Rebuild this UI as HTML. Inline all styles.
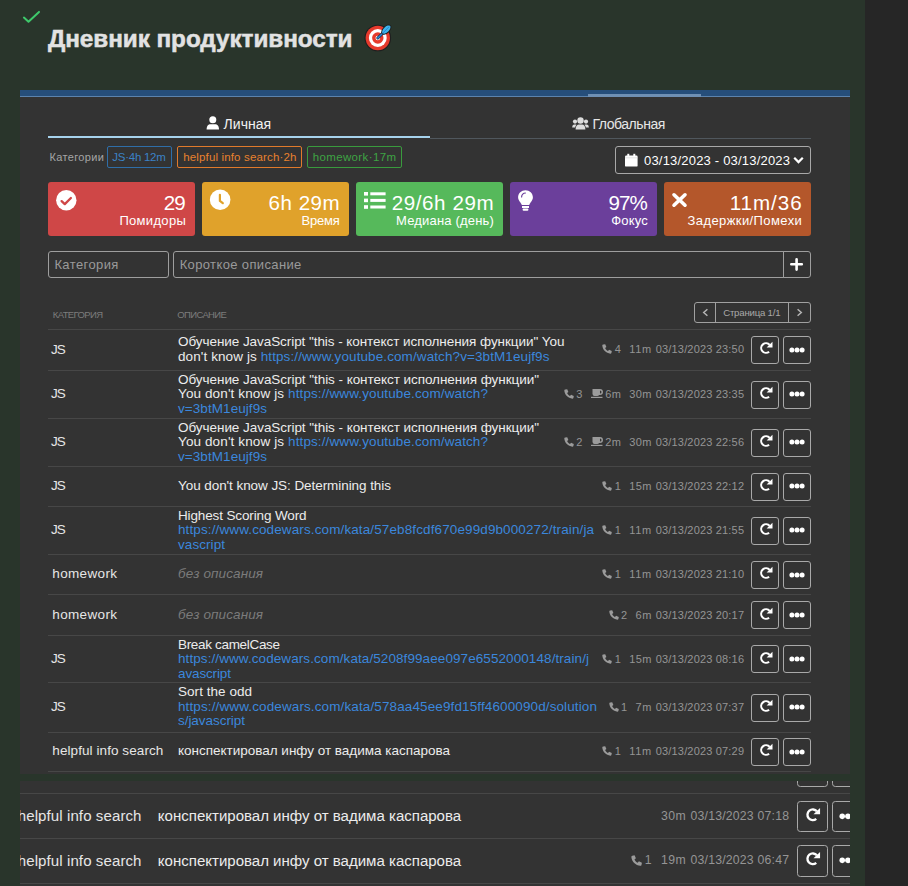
<!DOCTYPE html>
<html><head><meta charset="utf-8">
<style>
html,body{margin:0;padding:0;}
body{width:908px;height:886px;overflow:hidden;position:relative;background:#29352b;font-family:"Liberation Sans", sans-serif;}
.a{position:absolute;box-sizing:border-box;}
.t{position:absolute;white-space:nowrap;}
svg{position:absolute;overflow:visible;}
.lk{color:#3b87dc;}
.clip{position:absolute;overflow:hidden;}
</style></head><body>
<div class="a" style="left:865px;top:0px;width:43px;height:886px;background:#262626"></div>
<svg style="left:0;top:0" width="60" height="40"><polyline points="23.9,17.6 28.5,21.8 39,11.9" fill="none" stroke="#3ec96b" stroke-width="2" stroke-linecap="round" stroke-linejoin="round"/></svg>
<div class="t" style="font-size:24.3px;line-height:29px;color:#e2e2e2;font-weight:bold;top:23.68px;left:48px;letter-spacing:-0.058px;-webkit-text-stroke:0.5px #e2e2e2;">Дневник продуктивности</div>
<svg style="left:364px;top:24px" width="28" height="28" viewBox="0 0 28 28">
<circle cx="13.8" cy="14" r="13.3" fill="#1f1f1f"/>
<circle cx="13.8" cy="14" r="12.2" fill="#e63a2c"/>
<circle cx="13.8" cy="14" r="8.9" fill="#fff"/>
<circle cx="13.8" cy="14" r="5.7" fill="#e63a2c"/>
<circle cx="13.8" cy="14" r="2.3" fill="#fff"/>
<line x1="13.8" y1="14" x2="21" y2="7" stroke="#1d3550" stroke-width="3" stroke-linecap="round"/>
<line x1="13.8" y1="14" x2="21" y2="7" stroke="#2a86d8" stroke-width="1.5" stroke-linecap="round"/>
<ellipse cx="22.3" cy="5.6" rx="6.3" ry="3.6" transform="rotate(-45 22.3 5.6)" fill="#1f1f1f"/>
<ellipse cx="22.3" cy="5.6" rx="5.3" ry="2.7" transform="rotate(-45 22.3 5.6)" fill="#3cb6ec"/>
<line x1="18.5" y1="9.4" x2="25" y2="2.9" stroke="#2a86d8" stroke-width="1"/>
</svg>
<div class="a" style="left:20px;top:781px;width:830px;height:105px;background:#333333"></div>
<div class="a" style="left:20px;top:90px;width:830px;height:684px;background:#333333"></div>
<div class="a" style="left:20px;top:90px;width:830px;height:6px;background:#264e7a"></div>
<div class="a" style="left:20px;top:96px;width:830px;height:1px;background:#5c83ad"></div>
<div class="a" style="left:588px;top:94px;width:113px;height:3px;background:#6f90b4"></div>
<svg style="left:206px;top:116px" width="14" height="14" viewBox="0 0 14 14"><circle cx="6.8" cy="3.7" r="3.5" fill="#fff"/><path d="M0.6,13.6 C0.6,9.8 2.2,8.2 4.6,8.2 L9,8.2 C11.4,8.2 13,9.8 13,13.6 Z" fill="#fff"/></svg>
<div class="t" style="font-size:14px;line-height:17px;color:#f2f2f2;top:115.75px;left:223.6px;letter-spacing:0.039px;">Личная</div>
<svg style="left:572px;top:117px" width="17" height="13" viewBox="0 0 17 13"><circle cx="8.5" cy="3.5" r="3.2" fill="#ddd"/><path d="M3.6,12.6 C3.6,9.2 5,7.6 7,7.6 L10,7.6 C12,7.6 13.4,9.2 13.4,12.6 Z" fill="#ddd"/><circle cx="3" cy="4.6" r="2.1" fill="#ddd"/><circle cx="14" cy="4.6" r="2.1" fill="#ddd"/><path d="M0.2,10.6 C0.2,8.2 1,7.4 2.4,7.4 L4.4,7.4 L3,10.6 Z" fill="#ddd"/><path d="M16.8,10.6 C16.8,8.2 16,7.4 14.6,7.4 L12.6,7.4 L14,10.6 Z" fill="#ddd"/></svg>
<div class="t" style="font-size:14px;line-height:17px;color:#e6e6e6;top:115.85px;left:592.4px;letter-spacing:-0.439px;">Глобальная</div>
<div class="a" style="left:48px;top:136px;width:382px;height:2px;background:#a6d2ec"></div>
<div class="a" style="left:430px;top:138px;width:381px;height:1px;background:#50575d"></div>
<div class="t" style="font-size:11px;line-height:13px;color:#a5a5a5;top:150.99px;left:49.4px;letter-spacing:0.372px;">Категории</div>
<div class="a" style="left:107px;top:146px;width:65px;height:22px;border:1px solid #2f6ea8;border-radius:2px"></div>
<div class="t" style="font-size:11.5px;line-height:14px;color:#3b82c6;top:150.32px;left:112.3px;letter-spacing:-0.264px;">JS·4h 12m</div>
<div class="a" style="left:177px;top:146px;width:125px;height:22px;border:1px solid #e07a2b;border-radius:2px"></div>
<div class="t" style="font-size:11.5px;line-height:14px;color:#e8812e;top:150.32px;left:183.2px;letter-spacing:0.154px;">helpful info search·2h</div>
<div class="a" style="left:307px;top:146px;width:95px;height:22px;border:1px solid #399a3d;border-radius:2px"></div>
<div class="t" style="font-size:11.5px;line-height:14px;color:#3ea343;top:150.32px;left:312.7px;letter-spacing:0.368px;">homework·17m</div>
<div class="a" style="left:615px;top:146px;width:196px;height:28px;border:1px solid #a8a8a8;border-radius:3px"></div>
<svg style="left:625px;top:153px" width="13" height="14" viewBox="0 0 13 14"><rect x="0" y="2.6" width="12.6" height="11" rx="1.2" fill="#fff"/><rect x="2.3" y="0.8" width="2" height="3" fill="#fff"/><rect x="8.3" y="0.8" width="2" height="3" fill="#fff"/><rect x="0" y="4.6" width="12.6" height="0.6" fill="#cfcfcf"/></svg>
<div class="t" style="font-size:13px;line-height:16px;color:#fff;top:152.60px;left:644px;letter-spacing:0.196px;">03/13/2023 - 03/13/2023</div>
<svg style="left:793px;top:156px" width="11" height="8" viewBox="0 0 11 8"><polyline points="2,2.6 5.5,6.1 9,2.6" fill="none" stroke="#fff" stroke-width="2.2" stroke-linecap="square"/></svg>
<div class="a" style="left:48px;top:182px;width:147px;height:54px;background:#cf4747;border-radius:3px"></div>
<div class="t" style="font-size:20.6px;line-height:25px;color:#fff;top:189.86px;right:723.12px;text-align:right;letter-spacing:-0.822px;">29</div>
<div class="t" style="font-size:13px;line-height:16px;color:#fff;top:212.70px;right:721.88px;text-align:right;letter-spacing:0.318px;">Помидоры</div>
<svg style="left:56.0px;top:190px" width="21" height="21" viewBox="0 0 21 21"><circle cx="10.3" cy="10.3" r="10.2" fill="#fff"/><polyline points="5.6,11.1 8.8,14.1 14.9,8" fill="none" stroke="#cf4747" stroke-width="2.3" stroke-linecap="round" stroke-linejoin="round"/></svg>
<div class="a" style="left:202px;top:182px;width:147px;height:54px;background:#e0a22b;border-radius:3px"></div>
<div class="t" style="font-size:20.6px;line-height:25px;color:#fff;top:189.86px;right:567.82px;text-align:right;letter-spacing:0.479px;">6h 29m</div>
<div class="t" style="font-size:13px;line-height:16px;color:#fff;top:212.70px;right:568.40px;text-align:right;letter-spacing:-0.202px;">Время</div>
<svg style="left:210.4px;top:190.4px" width="21" height="21" viewBox="0 0 21 21"><circle cx="10.15" cy="9.8" r="10.3" fill="#fff"/><path d="M9.9,4.8 V10.9 L12.8,13.2" fill="none" stroke="#e0a22b" stroke-width="2.2" stroke-linecap="round" stroke-linejoin="round"/></svg>
<div class="a" style="left:356px;top:182px;width:147px;height:54px;background:#56b95b;border-radius:3px"></div>
<div class="t" style="font-size:20.6px;line-height:25px;color:#fff;top:189.86px;right:413.70px;text-align:right;letter-spacing:0.596px;">29/6h 29m</div>
<div class="t" style="font-size:13px;line-height:16px;color:#fff;top:212.70px;right:414.02px;text-align:right;letter-spacing:0.181px;">Медиана (день)</div>
<svg style="left:363.7px;top:191.9px" width="22" height="17" viewBox="0 0 22 17"><rect x="0" y="0" width="4" height="3.6" fill="#fff"/><rect x="0" y="6.6" width="4" height="3.6" fill="#fff"/><rect x="0" y="13.2" width="4" height="3.6" fill="#fff"/><rect x="6.3" y="0.3" width="15.3" height="3" fill="#fff"/><rect x="6.3" y="6.9" width="15.3" height="3" fill="#fff"/><rect x="6.3" y="13.5" width="15.3" height="3" fill="#fff"/></svg>
<div class="a" style="left:510px;top:182px;width:147px;height:54px;background:#6b3f9b;border-radius:3px"></div>
<div class="t" style="font-size:20.6px;line-height:25px;color:#fff;top:189.86px;right:261.26px;text-align:right;letter-spacing:-0.959px;">97%</div>
<div class="t" style="font-size:13px;line-height:16px;color:#fff;top:212.70px;right:260.03px;text-align:right;letter-spacing:0.172px;">Фокус</div>
<svg style="left:518.2px;top:190px" width="16" height="21" viewBox="0 0 16 21"><path d="M7.5,0.2 C11.6,0.2 14.9,3.3 14.9,7.3 C14.9,10.9 12.1,12.5 11.3,15 H3.8 C3,12.5 0.1,10.9 0.1,7.3 C0.1,3.3 3.4,0.2 7.5,0.2 Z" fill="#fff"/><path d="M3.6,7 C3.6,4.6 5.4,3 7.4,3" fill="none" stroke="#6b3f9b" stroke-width="1.2" stroke-linecap="round"/><rect x="4" y="16" width="7" height="2" fill="#fff"/><rect x="4.6" y="18.6" width="5.8" height="2.2" rx="1" fill="#fff"/></svg>
<div class="a" style="left:664px;top:182px;width:147px;height:54px;background:#b4572b;border-radius:3px"></div>
<div class="t" style="font-size:20.6px;line-height:25px;color:#fff;top:189.86px;right:105.31px;text-align:right;letter-spacing:0.986px;">11m/36</div>
<div class="t" style="font-size:13px;line-height:16px;color:#fff;top:212.70px;right:105.80px;text-align:right;letter-spacing:0.399px;">Задержки/Помехи</div>
<svg style="left:671.9px;top:193.3px" width="15" height="14" viewBox="0 0 15 14"><path d="M2,1.8 L13,12.2 M13,1.8 L2,12.2" stroke="#fff" stroke-width="3.6" stroke-linecap="round"/></svg>
<div class="a" style="left:48px;top:251px;width:121px;height:27px;border:1px solid #9e9e9e;border-radius:3px"></div>
<div class="t" style="font-size:13px;line-height:16px;color:#9a9a9a;top:256.60px;left:54.4px;letter-spacing:0.402px;">Категория</div>
<div class="a" style="left:173px;top:251px;width:611px;height:27px;border:1px solid #9e9e9e;border-radius:3px 0 0 3px"></div>
<div class="t" style="font-size:13px;line-height:16px;color:#9a9a9a;top:256.60px;left:179.7px;letter-spacing:0.364px;">Короткое описание</div>
<div class="a" style="left:783px;top:251px;width:28px;height:27px;border:1px solid #9e9e9e;border-radius:0 3px 3px 0"></div>
<svg style="left:790px;top:258px" width="13" height="13" viewBox="0 0 13 13"><path d="M6.6,1.3 V11.6 M1.3,6.3 H11.8" stroke="#fff" stroke-width="2.6" stroke-linecap="round"/></svg>
<div class="t" style="font-size:9.5px;line-height:11px;color:#7c7c7c;top:309.31px;left:52.8px;letter-spacing:-0.637px;">КАТЕГОРИЯ</div>
<div class="t" style="font-size:9.5px;line-height:11px;color:#7c7c7c;top:309.31px;left:177.3px;letter-spacing:-0.652px;">ОПИСАНИЕ</div>
<div class="a" style="left:694px;top:302px;width:117px;height:21px;border:1px solid #a0a0a0;border-radius:3px"></div>
<div class="a" style="left:715px;top:302px;width:1px;height:21px;background:#a0a0a0"></div>
<div class="a" style="left:788px;top:302px;width:1px;height:21px;background:#a0a0a0"></div>
<svg style="left:701px;top:307px" width="8" height="11" viewBox="0 0 8 11"><polyline points="6.4,2.3 2.7,5.55 6.4,8.8" fill="none" stroke="#b4b4b4" stroke-width="1.5"/></svg>
<svg style="left:796px;top:307px" width="8" height="11" viewBox="0 0 8 11"><polyline points="1.6,2.3 5.3,5.55 1.6,8.8" fill="none" stroke="#b4b4b4" stroke-width="1.5"/></svg>
<div class="t" style="font-size:9.6px;line-height:12px;color:#a9a9a9;top:307.07px;left:723.2px;letter-spacing:-0.199px;">Страница 1/1</div>
<div class="a" style="left:48px;top:329px;width:763px;height:1px;background:#474747"></div>
<div class="t" style="font-size:13.5px;line-height:16px;color:#e6e6e6;top:341.72px;left:51.0px;letter-spacing:-0.9px;">JS</div>
<div class="t" style="font-size:13.5px;line-height:16px;color:#ececec;top:334.42px;left:178px;letter-spacing:-0.064px;">Обучение JavaScript "this - контекст исполнения функции" You</div>
<div class="t" style="font-size:13.5px;line-height:16px;color:#ececec;top:348.72px;left:178px;letter-spacing:0.095px;">don't know js <span class="lk">https://www.youtube.com/watch?v=3btM1eujf9s</span></div>
<div class="t" style="font-size:11.0px;line-height:13px;color:#959595;top:343.49px;right:163.82px;text-align:right;letter-spacing:0.177px;">03/13/2023 23:50</div>
<div class="t" style="font-size:11.0px;line-height:13px;color:#959595;top:343.49px;right:256.00px;text-align:right;letter-spacing:0.703px;">11m</div>
<div class="t" style="font-size:11.0px;line-height:13px;color:#959595;top:343.49px;right:287.03px;text-align:right;letter-spacing:0.175px;">4</div>
<svg style="left:602.3px;top:344.3px" width="10.0" height="10.0" viewBox="0 0 10 10"><path fill="#9b9b9b" d="M1.2,0.6 L3.2,0.2 L4.4,3 L3.1,4.1 C3.8,5.6 4.6,6.4 6,7 L7.1,5.7 L9.8,6.9 L9.4,8.9 C9.3,9.4 8.9,9.7 8.4,9.7 C4.2,9.5 0.6,5.9 0.3,1.6 C0.3,1.1 0.6,0.7 1.2,0.6 Z"/></svg>
<div class="a" style="left:751px;top:336.0px;width:28.0px;height:28.0px;border:1.30px solid #a9a9a9;border-radius:3.0px"></div>
<div class="a" style="left:783px;top:336.0px;width:28.0px;height:28.0px;border:1.30px solid #a9a9a9;border-radius:3.0px"></div>
<svg style="left:758.5px;top:341.3px" width="14.0" height="14.0" viewBox="0 0 14 14"><path d="M10.68,3.91 A4.8,4.8 0 1 0 10.09,10.68" fill="none" stroke="#fff" stroke-width="2.1" /><path d="M13.5,0.8 L13.5,6.6 L7.6,6.4 Z" fill="#fff"/></svg>
<svg style="left:789.0px;top:346.8px" width="16.0" height="6.0" viewBox="0 0 16 6"><circle cx="2.9" cy="3" r="2.5" fill="#fff"/><circle cx="8" cy="3" r="2.5" fill="#fff"/><circle cx="13.1" cy="3" r="2.5" fill="#fff"/></svg>
<div class="a" style="left:48px;top:370px;width:763px;height:1px;background:#474747"></div>
<div class="t" style="font-size:13.5px;line-height:16px;color:#e6e6e6;top:386.22px;left:51.0px;letter-spacing:-0.9px;">JS</div>
<div class="t" style="font-size:13.5px;line-height:16px;color:#ececec;top:371.82px;left:178px;letter-spacing:-0.050px;">Обучение JavaScript "this - контекст исполнения функции"</div>
<div class="t" style="font-size:13.5px;line-height:16px;color:#ececec;top:386.22px;left:178px;letter-spacing:0.117px;">You don't know js <span class="lk">https://www.youtube.com/watch?</span></div>
<div class="t" style="font-size:13.5px;line-height:16px;color:#ececec;top:400.92px;left:178px;letter-spacing:0.068px;"><span class="lk">v=3btM1eujf9s</span></div>
<div class="t" style="font-size:11.0px;line-height:13px;color:#959595;top:387.99px;right:163.82px;text-align:right;letter-spacing:0.177px;">03/13/2023 23:35</div>
<div class="t" style="font-size:11.0px;line-height:13px;color:#959595;top:387.99px;right:256.40px;text-align:right;letter-spacing:0.297px;">30m</div>
<div class="t" style="font-size:11.0px;line-height:13px;color:#959595;top:387.99px;right:286.58px;text-align:right;letter-spacing:0.419px;">6m</div>
<svg style="left:590.8999999999999px;top:389.4px" width="12.2" height="9.0" viewBox="0 0 12.2 9"><path fill="#9b9b9b" d="M1.5,0 H9 A3,3 0 0 1 9,6 H8.2 A2.5,2.5 0 0 1 6,7 H3.5 A2.2,2.2 0 0 1 1.5,5 Z M9,1.5 V4.5 A1.5,1.5 0 0 0 9,1.5 Z"/><rect fill="#9b9b9b" x="0" y="7.8" width="11.5" height="1.2"/></svg>
<div class="t" style="font-size:11.0px;line-height:13px;color:#959595;top:387.99px;right:325.43px;text-align:right;letter-spacing:0.175px;">3</div>
<svg style="left:563.8999999999999px;top:388.8px" width="10.0" height="10.0" viewBox="0 0 10 10"><path fill="#9b9b9b" d="M1.2,0.6 L3.2,0.2 L4.4,3 L3.1,4.1 C3.8,5.6 4.6,6.4 6,7 L7.1,5.7 L9.8,6.9 L9.4,8.9 C9.3,9.4 8.9,9.7 8.4,9.7 C4.2,9.5 0.6,5.9 0.3,1.6 C0.3,1.1 0.6,0.7 1.2,0.6 Z"/></svg>
<div class="a" style="left:751px;top:380.5px;width:28.0px;height:28.0px;border:1.30px solid #a9a9a9;border-radius:3.0px"></div>
<div class="a" style="left:783px;top:380.5px;width:28.0px;height:28.0px;border:1.30px solid #a9a9a9;border-radius:3.0px"></div>
<svg style="left:758.5px;top:385.8px" width="14.0" height="14.0" viewBox="0 0 14 14"><path d="M10.68,3.91 A4.8,4.8 0 1 0 10.09,10.68" fill="none" stroke="#fff" stroke-width="2.1" /><path d="M13.5,0.8 L13.5,6.6 L7.6,6.4 Z" fill="#fff"/></svg>
<svg style="left:789.0px;top:391.3px" width="16.0" height="6.0" viewBox="0 0 16 6"><circle cx="2.9" cy="3" r="2.5" fill="#fff"/><circle cx="8" cy="3" r="2.5" fill="#fff"/><circle cx="13.1" cy="3" r="2.5" fill="#fff"/></svg>
<div class="a" style="left:48px;top:418px;width:763px;height:1px;background:#474747"></div>
<div class="t" style="font-size:13.5px;line-height:16px;color:#e6e6e6;top:434.22px;left:51.0px;letter-spacing:-0.9px;">JS</div>
<div class="t" style="font-size:13.5px;line-height:16px;color:#ececec;top:419.82px;left:178px;letter-spacing:-0.050px;">Обучение JavaScript "this - контекст исполнения функции"</div>
<div class="t" style="font-size:13.5px;line-height:16px;color:#ececec;top:434.22px;left:178px;letter-spacing:0.117px;">You don't know js <span class="lk">https://www.youtube.com/watch?</span></div>
<div class="t" style="font-size:13.5px;line-height:16px;color:#ececec;top:448.92px;left:178px;letter-spacing:0.068px;"><span class="lk">v=3btM1eujf9s</span></div>
<div class="t" style="font-size:11.0px;line-height:13px;color:#959595;top:435.99px;right:163.82px;text-align:right;letter-spacing:0.177px;">03/13/2023 22:56</div>
<div class="t" style="font-size:11.0px;line-height:13px;color:#959595;top:435.99px;right:256.40px;text-align:right;letter-spacing:0.297px;">30m</div>
<div class="t" style="font-size:11.0px;line-height:13px;color:#959595;top:435.99px;right:286.58px;text-align:right;letter-spacing:0.419px;">2m</div>
<svg style="left:590.8999999999999px;top:437.4px" width="12.2" height="9.0" viewBox="0 0 12.2 9"><path fill="#9b9b9b" d="M1.5,0 H9 A3,3 0 0 1 9,6 H8.2 A2.5,2.5 0 0 1 6,7 H3.5 A2.2,2.2 0 0 1 1.5,5 Z M9,1.5 V4.5 A1.5,1.5 0 0 0 9,1.5 Z"/><rect fill="#9b9b9b" x="0" y="7.8" width="11.5" height="1.2"/></svg>
<div class="t" style="font-size:11.0px;line-height:13px;color:#959595;top:435.99px;right:325.43px;text-align:right;letter-spacing:0.175px;">2</div>
<svg style="left:563.8999999999999px;top:436.8px" width="10.0" height="10.0" viewBox="0 0 10 10"><path fill="#9b9b9b" d="M1.2,0.6 L3.2,0.2 L4.4,3 L3.1,4.1 C3.8,5.6 4.6,6.4 6,7 L7.1,5.7 L9.8,6.9 L9.4,8.9 C9.3,9.4 8.9,9.7 8.4,9.7 C4.2,9.5 0.6,5.9 0.3,1.6 C0.3,1.1 0.6,0.7 1.2,0.6 Z"/></svg>
<div class="a" style="left:751px;top:428.5px;width:28.0px;height:28.0px;border:1.30px solid #a9a9a9;border-radius:3.0px"></div>
<div class="a" style="left:783px;top:428.5px;width:28.0px;height:28.0px;border:1.30px solid #a9a9a9;border-radius:3.0px"></div>
<svg style="left:758.5px;top:433.8px" width="14.0" height="14.0" viewBox="0 0 14 14"><path d="M10.68,3.91 A4.8,4.8 0 1 0 10.09,10.68" fill="none" stroke="#fff" stroke-width="2.1" /><path d="M13.5,0.8 L13.5,6.6 L7.6,6.4 Z" fill="#fff"/></svg>
<svg style="left:789.0px;top:439.3px" width="16.0" height="6.0" viewBox="0 0 16 6"><circle cx="2.9" cy="3" r="2.5" fill="#fff"/><circle cx="8" cy="3" r="2.5" fill="#fff"/><circle cx="13.1" cy="3" r="2.5" fill="#fff"/></svg>
<div class="a" style="left:48px;top:466px;width:763px;height:1px;background:#474747"></div>
<div class="t" style="font-size:13.5px;line-height:16px;color:#e6e6e6;top:478.22px;left:51.0px;letter-spacing:-0.9px;">JS</div>
<div class="t" style="font-size:13.5px;line-height:16px;color:#ececec;top:478.22px;left:178px;letter-spacing:-0.065px;">You don't know JS: Determining this</div>
<div class="t" style="font-size:11.0px;line-height:13px;color:#959595;top:479.99px;right:163.82px;text-align:right;letter-spacing:0.177px;">03/13/2023 22:12</div>
<div class="t" style="font-size:11.0px;line-height:13px;color:#959595;top:479.99px;right:256.40px;text-align:right;letter-spacing:0.297px;">15m</div>
<div class="t" style="font-size:11.0px;line-height:13px;color:#959595;top:479.99px;right:287.03px;text-align:right;letter-spacing:0.175px;">1</div>
<svg style="left:602.3px;top:480.8px" width="10.0" height="10.0" viewBox="0 0 10 10"><path fill="#9b9b9b" d="M1.2,0.6 L3.2,0.2 L4.4,3 L3.1,4.1 C3.8,5.6 4.6,6.4 6,7 L7.1,5.7 L9.8,6.9 L9.4,8.9 C9.3,9.4 8.9,9.7 8.4,9.7 C4.2,9.5 0.6,5.9 0.3,1.6 C0.3,1.1 0.6,0.7 1.2,0.6 Z"/></svg>
<div class="a" style="left:751px;top:472.5px;width:28.0px;height:28.0px;border:1.30px solid #a9a9a9;border-radius:3.0px"></div>
<div class="a" style="left:783px;top:472.5px;width:28.0px;height:28.0px;border:1.30px solid #a9a9a9;border-radius:3.0px"></div>
<svg style="left:758.5px;top:477.8px" width="14.0" height="14.0" viewBox="0 0 14 14"><path d="M10.68,3.91 A4.8,4.8 0 1 0 10.09,10.68" fill="none" stroke="#fff" stroke-width="2.1" /><path d="M13.5,0.8 L13.5,6.6 L7.6,6.4 Z" fill="#fff"/></svg>
<svg style="left:789.0px;top:483.3px" width="16.0" height="6.0" viewBox="0 0 16 6"><circle cx="2.9" cy="3" r="2.5" fill="#fff"/><circle cx="8" cy="3" r="2.5" fill="#fff"/><circle cx="13.1" cy="3" r="2.5" fill="#fff"/></svg>
<div class="a" style="left:48px;top:506px;width:763px;height:1px;background:#474747"></div>
<div class="t" style="font-size:13.5px;line-height:16px;color:#e6e6e6;top:522.22px;left:51.0px;letter-spacing:-0.9px;">JS</div>
<div class="t" style="font-size:13.5px;line-height:16px;color:#ececec;top:507.82px;left:178px;letter-spacing:-0.130px;">Highest Scoring Word</div>
<div class="t" style="font-size:13.5px;line-height:16px;color:#ececec;top:522.22px;left:178px;letter-spacing:0.113px;"><span class="lk">https://www.codewars.com/kata/57eb8fcdf670e99d9b000272/train/ja</span></div>
<div class="t" style="font-size:13.5px;line-height:16px;color:#ececec;top:536.92px;left:178px;letter-spacing:0.069px;"><span class="lk">vascript</span></div>
<div class="t" style="font-size:11.0px;line-height:13px;color:#959595;top:523.99px;right:163.82px;text-align:right;letter-spacing:0.177px;">03/13/2023 21:55</div>
<div class="t" style="font-size:11.0px;line-height:13px;color:#959595;top:523.99px;right:256.00px;text-align:right;letter-spacing:0.703px;">11m</div>
<div class="t" style="font-size:11.0px;line-height:13px;color:#959595;top:523.99px;right:287.03px;text-align:right;letter-spacing:0.175px;">1</div>
<svg style="left:602.3px;top:524.8px" width="10.0" height="10.0" viewBox="0 0 10 10"><path fill="#9b9b9b" d="M1.2,0.6 L3.2,0.2 L4.4,3 L3.1,4.1 C3.8,5.6 4.6,6.4 6,7 L7.1,5.7 L9.8,6.9 L9.4,8.9 C9.3,9.4 8.9,9.7 8.4,9.7 C4.2,9.5 0.6,5.9 0.3,1.6 C0.3,1.1 0.6,0.7 1.2,0.6 Z"/></svg>
<div class="a" style="left:751px;top:516.5px;width:28.0px;height:28.0px;border:1.30px solid #a9a9a9;border-radius:3.0px"></div>
<div class="a" style="left:783px;top:516.5px;width:28.0px;height:28.0px;border:1.30px solid #a9a9a9;border-radius:3.0px"></div>
<svg style="left:758.5px;top:521.8px" width="14.0" height="14.0" viewBox="0 0 14 14"><path d="M10.68,3.91 A4.8,4.8 0 1 0 10.09,10.68" fill="none" stroke="#fff" stroke-width="2.1" /><path d="M13.5,0.8 L13.5,6.6 L7.6,6.4 Z" fill="#fff"/></svg>
<svg style="left:789.0px;top:527.3px" width="16.0" height="6.0" viewBox="0 0 16 6"><circle cx="2.9" cy="3" r="2.5" fill="#fff"/><circle cx="8" cy="3" r="2.5" fill="#fff"/><circle cx="13.1" cy="3" r="2.5" fill="#fff"/></svg>
<div class="a" style="left:48px;top:554px;width:763px;height:1px;background:#474747"></div>
<div class="t" style="font-size:13.5px;line-height:16px;color:#e6e6e6;top:566.47px;left:52.3px;letter-spacing:0.346px;">homework</div>
<div class="t" style="font-size:13.5px;line-height:16px;color:#7b7b7b;font-style:italic;top:566.47px;left:178px;letter-spacing:0.107px;">без описания</div>
<div class="t" style="font-size:11.0px;line-height:13px;color:#959595;top:568.24px;right:163.82px;text-align:right;letter-spacing:0.177px;">03/13/2023 21:10</div>
<div class="t" style="font-size:11.0px;line-height:13px;color:#959595;top:568.24px;right:256.00px;text-align:right;letter-spacing:0.703px;">11m</div>
<div class="t" style="font-size:11.0px;line-height:13px;color:#959595;top:568.24px;right:287.03px;text-align:right;letter-spacing:0.175px;">1</div>
<svg style="left:602.3px;top:569.05px" width="10.0" height="10.0" viewBox="0 0 10 10"><path fill="#9b9b9b" d="M1.2,0.6 L3.2,0.2 L4.4,3 L3.1,4.1 C3.8,5.6 4.6,6.4 6,7 L7.1,5.7 L9.8,6.9 L9.4,8.9 C9.3,9.4 8.9,9.7 8.4,9.7 C4.2,9.5 0.6,5.9 0.3,1.6 C0.3,1.1 0.6,0.7 1.2,0.6 Z"/></svg>
<div class="a" style="left:751px;top:560.75px;width:28.0px;height:28.0px;border:1.30px solid #a9a9a9;border-radius:3.0px"></div>
<div class="a" style="left:783px;top:560.75px;width:28.0px;height:28.0px;border:1.30px solid #a9a9a9;border-radius:3.0px"></div>
<svg style="left:758.5px;top:566.05px" width="14.0" height="14.0" viewBox="0 0 14 14"><path d="M10.68,3.91 A4.8,4.8 0 1 0 10.09,10.68" fill="none" stroke="#fff" stroke-width="2.1" /><path d="M13.5,0.8 L13.5,6.6 L7.6,6.4 Z" fill="#fff"/></svg>
<svg style="left:789.0px;top:571.55px" width="16.0" height="6.0" viewBox="0 0 16 6"><circle cx="2.9" cy="3" r="2.5" fill="#fff"/><circle cx="8" cy="3" r="2.5" fill="#fff"/><circle cx="13.1" cy="3" r="2.5" fill="#fff"/></svg>
<div class="a" style="left:48px;top:594px;width:763px;height:1px;background:#474747"></div>
<div class="t" style="font-size:13.5px;line-height:16px;color:#e6e6e6;top:606.97px;left:52.3px;letter-spacing:0.346px;">homework</div>
<div class="t" style="font-size:13.5px;line-height:16px;color:#7b7b7b;font-style:italic;top:606.97px;left:178px;letter-spacing:0.107px;">без описания</div>
<div class="t" style="font-size:11.0px;line-height:13px;color:#959595;top:608.74px;right:163.82px;text-align:right;letter-spacing:0.177px;">03/13/2023 20:17</div>
<div class="t" style="font-size:11.0px;line-height:13px;color:#959595;top:608.74px;right:256.28px;text-align:right;letter-spacing:0.419px;">6m</div>
<div class="t" style="font-size:11.0px;line-height:13px;color:#959595;top:608.74px;right:280.73px;text-align:right;letter-spacing:0.175px;">2</div>
<svg style="left:608.5999999999999px;top:609.55px" width="10.0" height="10.0" viewBox="0 0 10 10"><path fill="#9b9b9b" d="M1.2,0.6 L3.2,0.2 L4.4,3 L3.1,4.1 C3.8,5.6 4.6,6.4 6,7 L7.1,5.7 L9.8,6.9 L9.4,8.9 C9.3,9.4 8.9,9.7 8.4,9.7 C4.2,9.5 0.6,5.9 0.3,1.6 C0.3,1.1 0.6,0.7 1.2,0.6 Z"/></svg>
<div class="a" style="left:751px;top:601.25px;width:28.0px;height:28.0px;border:1.30px solid #a9a9a9;border-radius:3.0px"></div>
<div class="a" style="left:783px;top:601.25px;width:28.0px;height:28.0px;border:1.30px solid #a9a9a9;border-radius:3.0px"></div>
<svg style="left:758.5px;top:606.55px" width="14.0" height="14.0" viewBox="0 0 14 14"><path d="M10.68,3.91 A4.8,4.8 0 1 0 10.09,10.68" fill="none" stroke="#fff" stroke-width="2.1" /><path d="M13.5,0.8 L13.5,6.6 L7.6,6.4 Z" fill="#fff"/></svg>
<svg style="left:789.0px;top:612.05px" width="16.0" height="6.0" viewBox="0 0 16 6"><circle cx="2.9" cy="3" r="2.5" fill="#fff"/><circle cx="8" cy="3" r="2.5" fill="#fff"/><circle cx="13.1" cy="3" r="2.5" fill="#fff"/></svg>
<div class="a" style="left:48px;top:635px;width:763px;height:1px;background:#474747"></div>
<div class="t" style="font-size:13.5px;line-height:16px;color:#e6e6e6;top:650.97px;left:51.0px;letter-spacing:-0.9px;">JS</div>
<div class="t" style="font-size:13.5px;line-height:16px;color:#ececec;top:636.82px;left:178px;letter-spacing:-0.325px;">Break camelCase</div>
<div class="t" style="font-size:13.5px;line-height:16px;color:#ececec;top:651.22px;left:178px;letter-spacing:0.081px;"><span class="lk">https://www.codewars.com/kata/5208f99aee097e6552000148/train/j</span></div>
<div class="t" style="font-size:13.5px;line-height:16px;color:#ececec;top:665.92px;left:178px;letter-spacing:-0.129px;"><span class="lk">avascript</span></div>
<div class="t" style="font-size:11.0px;line-height:13px;color:#959595;top:652.74px;right:163.82px;text-align:right;letter-spacing:0.177px;">03/13/2023 08:16</div>
<div class="t" style="font-size:11.0px;line-height:13px;color:#959595;top:652.74px;right:256.40px;text-align:right;letter-spacing:0.297px;">15m</div>
<div class="t" style="font-size:11.0px;line-height:13px;color:#959595;top:652.74px;right:287.03px;text-align:right;letter-spacing:0.175px;">1</div>
<svg style="left:602.3px;top:653.55px" width="10.0" height="10.0" viewBox="0 0 10 10"><path fill="#9b9b9b" d="M1.2,0.6 L3.2,0.2 L4.4,3 L3.1,4.1 C3.8,5.6 4.6,6.4 6,7 L7.1,5.7 L9.8,6.9 L9.4,8.9 C9.3,9.4 8.9,9.7 8.4,9.7 C4.2,9.5 0.6,5.9 0.3,1.6 C0.3,1.1 0.6,0.7 1.2,0.6 Z"/></svg>
<div class="a" style="left:751px;top:645.25px;width:28.0px;height:28.0px;border:1.30px solid #a9a9a9;border-radius:3.0px"></div>
<div class="a" style="left:783px;top:645.25px;width:28.0px;height:28.0px;border:1.30px solid #a9a9a9;border-radius:3.0px"></div>
<svg style="left:758.5px;top:650.55px" width="14.0" height="14.0" viewBox="0 0 14 14"><path d="M10.68,3.91 A4.8,4.8 0 1 0 10.09,10.68" fill="none" stroke="#fff" stroke-width="2.1" /><path d="M13.5,0.8 L13.5,6.6 L7.6,6.4 Z" fill="#fff"/></svg>
<svg style="left:789.0px;top:656.05px" width="16.0" height="6.0" viewBox="0 0 16 6"><circle cx="2.9" cy="3" r="2.5" fill="#fff"/><circle cx="8" cy="3" r="2.5" fill="#fff"/><circle cx="13.1" cy="3" r="2.5" fill="#fff"/></svg>
<div class="a" style="left:48px;top:682px;width:763px;height:1px;background:#474747"></div>
<div class="t" style="font-size:13.5px;line-height:16px;color:#e6e6e6;top:699.22px;left:51.0px;letter-spacing:-0.9px;">JS</div>
<div class="t" style="font-size:13.5px;line-height:16px;color:#ececec;top:684.32px;left:178px;letter-spacing:0.040px;">Sort the odd</div>
<div class="t" style="font-size:13.5px;line-height:16px;color:#ececec;top:698.72px;left:178px;letter-spacing:0.116px;"><span class="lk">https://www.codewars.com/kata/578aa45ee9fd15ff4600090d/solution</span></div>
<div class="t" style="font-size:13.5px;line-height:16px;color:#ececec;top:713.42px;left:178px;letter-spacing:-0.048px;"><span class="lk">s/javascript</span></div>
<div class="t" style="font-size:11.0px;line-height:13px;color:#959595;top:700.99px;right:163.82px;text-align:right;letter-spacing:0.177px;">03/13/2023 07:37</div>
<div class="t" style="font-size:11.0px;line-height:13px;color:#959595;top:700.99px;right:256.28px;text-align:right;letter-spacing:0.419px;">7m</div>
<div class="t" style="font-size:11.0px;line-height:13px;color:#959595;top:700.99px;right:280.73px;text-align:right;letter-spacing:0.175px;">1</div>
<svg style="left:608.5999999999999px;top:701.8px" width="10.0" height="10.0" viewBox="0 0 10 10"><path fill="#9b9b9b" d="M1.2,0.6 L3.2,0.2 L4.4,3 L3.1,4.1 C3.8,5.6 4.6,6.4 6,7 L7.1,5.7 L9.8,6.9 L9.4,8.9 C9.3,9.4 8.9,9.7 8.4,9.7 C4.2,9.5 0.6,5.9 0.3,1.6 C0.3,1.1 0.6,0.7 1.2,0.6 Z"/></svg>
<div class="a" style="left:751px;top:693.5px;width:28.0px;height:28.0px;border:1.30px solid #a9a9a9;border-radius:3.0px"></div>
<div class="a" style="left:783px;top:693.5px;width:28.0px;height:28.0px;border:1.30px solid #a9a9a9;border-radius:3.0px"></div>
<svg style="left:758.5px;top:698.8px" width="14.0" height="14.0" viewBox="0 0 14 14"><path d="M10.68,3.91 A4.8,4.8 0 1 0 10.09,10.68" fill="none" stroke="#fff" stroke-width="2.1" /><path d="M13.5,0.8 L13.5,6.6 L7.6,6.4 Z" fill="#fff"/></svg>
<svg style="left:789.0px;top:704.3px" width="16.0" height="6.0" viewBox="0 0 16 6"><circle cx="2.9" cy="3" r="2.5" fill="#fff"/><circle cx="8" cy="3" r="2.5" fill="#fff"/><circle cx="13.1" cy="3" r="2.5" fill="#fff"/></svg>
<div class="a" style="left:48px;top:732px;width:763px;height:1px;background:#474747"></div>
<div class="t" style="font-size:13.5px;line-height:16px;color:#e6e6e6;top:743.47px;left:52.3px;letter-spacing:0.079px;">helpful info search</div>
<div class="t" style="font-size:13.5px;line-height:16px;color:#ececec;top:743.47px;left:178px;letter-spacing:-0.012px;">конспектировал инфу от вадима каспарова</div>
<div class="t" style="font-size:11.0px;line-height:13px;color:#959595;top:745.24px;right:163.82px;text-align:right;letter-spacing:0.177px;">03/13/2023 07:29</div>
<div class="t" style="font-size:11.0px;line-height:13px;color:#959595;top:745.24px;right:256.00px;text-align:right;letter-spacing:0.703px;">11m</div>
<div class="t" style="font-size:11.0px;line-height:13px;color:#959595;top:745.24px;right:287.03px;text-align:right;letter-spacing:0.175px;">1</div>
<svg style="left:602.3px;top:746.05px" width="10.0" height="10.0" viewBox="0 0 10 10"><path fill="#9b9b9b" d="M1.2,0.6 L3.2,0.2 L4.4,3 L3.1,4.1 C3.8,5.6 4.6,6.4 6,7 L7.1,5.7 L9.8,6.9 L9.4,8.9 C9.3,9.4 8.9,9.7 8.4,9.7 C4.2,9.5 0.6,5.9 0.3,1.6 C0.3,1.1 0.6,0.7 1.2,0.6 Z"/></svg>
<div class="a" style="left:751px;top:737.75px;width:28.0px;height:28.0px;border:1.30px solid #a9a9a9;border-radius:3.0px"></div>
<div class="a" style="left:783px;top:737.75px;width:28.0px;height:28.0px;border:1.30px solid #a9a9a9;border-radius:3.0px"></div>
<svg style="left:758.5px;top:743.05px" width="14.0" height="14.0" viewBox="0 0 14 14"><path d="M10.68,3.91 A4.8,4.8 0 1 0 10.09,10.68" fill="none" stroke="#fff" stroke-width="2.1" /><path d="M13.5,0.8 L13.5,6.6 L7.6,6.4 Z" fill="#fff"/></svg>
<svg style="left:789.0px;top:748.55px" width="16.0" height="6.0" viewBox="0 0 16 6"><circle cx="2.9" cy="3" r="2.5" fill="#fff"/><circle cx="8" cy="3" r="2.5" fill="#fff"/><circle cx="13.1" cy="3" r="2.5" fill="#fff"/></svg>
<div class="a" style="left:48px;top:771px;width:763px;height:1px;background:#474747"></div>
<div class="clip" style="left:20px;top:781px;width:830px;height:105px">
<div class="t" style="font-size:15.0525px;line-height:18px;color:#e6e6e6;top:-18.59px;left:-2.285500000000006px;letter-spacing:0.091px;">helpful info search</div>
<div class="t" style="font-size:15.0525px;line-height:18px;color:#ececec;top:-18.59px;left:137.87px;letter-spacing:-0.010px;">конспектировал инфу от вадима каспарова</div>
<div class="t" style="font-size:12.265px;line-height:15px;color:#959595;top:-16.79px;right:60.83px;text-align:right;letter-spacing:0.205px;">03/13/2023 07:29</div>
<div class="t" style="font-size:12.265px;line-height:15px;color:#959595;top:-16.79px;right:163.60px;text-align:right;letter-spacing:0.804px;">11m</div>
<div class="t" style="font-size:12.265px;line-height:15px;color:#959595;top:-16.79px;right:198.21px;text-align:right;letter-spacing:0.196px;">1</div>
<svg style="left:610.9644999999999px;top:-15.633000000000152px" width="11.15" height="11.15" viewBox="0 0 10 10"><path fill="#9b9b9b" d="M1.2,0.6 L3.2,0.2 L4.4,3 L3.1,4.1 C3.8,5.6 4.6,6.4 6,7 L7.1,5.7 L9.8,6.9 L9.4,8.9 C9.3,9.4 8.9,9.7 8.4,9.7 C4.2,9.5 0.6,5.9 0.3,1.6 C0.3,1.1 0.6,0.7 1.2,0.6 Z"/></svg>
<div class="a" style="left:776.765px;top:-24.887500000000045px;width:31.220000000000027px;height:31.220000000000027px;border:1.45px solid #a9a9a9;border-radius:3.3px"></div>
<div class="a" style="left:812.4449999999999px;top:-24.887500000000045px;width:31.220000000000027px;height:31.220000000000027px;border:1.45px solid #a9a9a9;border-radius:3.3px"></div>
<svg style="left:785.1275px;top:-18.978000000000065px" width="15.61" height="15.61" viewBox="0 0 14 14"><path d="M10.68,3.91 A4.8,4.8 0 1 0 10.09,10.68" fill="none" stroke="#fff" stroke-width="2.1" /><path d="M13.5,0.8 L13.5,6.6 L7.6,6.4 Z" fill="#fff"/></svg>
<svg style="left:819.135px;top:-12.84550000000013px" width="17.84" height="6.6899999999999995" viewBox="0 0 16 6"><circle cx="2.9" cy="3" r="2.5" fill="#fff"/><circle cx="8" cy="3" r="2.5" fill="#fff"/><circle cx="13.1" cy="3" r="2.5" fill="#fff"/></svg>
<div class="a" style="left:-7.080000000000005px;top:12px;width:850.745px;height:1px;background:#474747"></div>
<div class="t" style="font-size:15.0525px;line-height:18px;color:#e6e6e6;top:26.01px;left:-2.285500000000006px;letter-spacing:0.091px;">helpful info search</div>
<div class="t" style="font-size:15.0525px;line-height:18px;color:#ececec;top:26.01px;left:137.87px;letter-spacing:-0.010px;">конспектировал инфу от вадима каспарова</div>
<div class="t" style="font-size:12.265px;line-height:15px;color:#959595;top:27.81px;right:60.83px;text-align:right;letter-spacing:0.205px;">03/13/2023 07:18</div>
<div class="t" style="font-size:12.265px;line-height:15px;color:#959595;top:27.81px;right:164.06px;text-align:right;letter-spacing:0.343px;">30m</div>
<div class="a" style="left:776.765px;top:19.712499999999977px;width:31.220000000000027px;height:31.220000000000027px;border:1.45px solid #a9a9a9;border-radius:3.3px"></div>
<div class="a" style="left:812.4449999999999px;top:19.712499999999977px;width:31.220000000000027px;height:31.220000000000027px;border:1.45px solid #a9a9a9;border-radius:3.3px"></div>
<svg style="left:785.1275px;top:25.621999999999957px" width="15.61" height="15.61" viewBox="0 0 14 14"><path d="M10.68,3.91 A4.8,4.8 0 1 0 10.09,10.68" fill="none" stroke="#fff" stroke-width="2.1" /><path d="M13.5,0.8 L13.5,6.6 L7.6,6.4 Z" fill="#fff"/></svg>
<svg style="left:819.135px;top:31.754499999999894px" width="17.84" height="6.6899999999999995" viewBox="0 0 16 6"><circle cx="2.9" cy="3" r="2.5" fill="#fff"/><circle cx="8" cy="3" r="2.5" fill="#fff"/><circle cx="13.1" cy="3" r="2.5" fill="#fff"/></svg>
<div class="a" style="left:-7.080000000000005px;top:57px;width:850.745px;height:1px;background:#474747"></div>
<div class="t" style="font-size:15.0525px;line-height:18px;color:#e6e6e6;top:70.61px;left:-2.285500000000006px;letter-spacing:0.091px;">helpful info search</div>
<div class="t" style="font-size:15.0525px;line-height:18px;color:#ececec;top:70.61px;left:137.87px;letter-spacing:-0.010px;">конспектировал инфу от вадима каспарова</div>
<div class="t" style="font-size:12.265px;line-height:15px;color:#959595;top:72.41px;right:60.83px;text-align:right;letter-spacing:0.205px;">03/13/2023 06:47</div>
<div class="t" style="font-size:12.265px;line-height:15px;color:#959595;top:72.41px;right:164.06px;text-align:right;letter-spacing:0.343px;">19m</div>
<div class="t" style="font-size:12.265px;line-height:15px;color:#959595;top:72.41px;right:198.21px;text-align:right;letter-spacing:0.196px;">1</div>
<svg style="left:610.9644999999999px;top:73.5669999999999px" width="11.15" height="11.15" viewBox="0 0 10 10"><path fill="#9b9b9b" d="M1.2,0.6 L3.2,0.2 L4.4,3 L3.1,4.1 C3.8,5.6 4.6,6.4 6,7 L7.1,5.7 L9.8,6.9 L9.4,8.9 C9.3,9.4 8.9,9.7 8.4,9.7 C4.2,9.5 0.6,5.9 0.3,1.6 C0.3,1.1 0.6,0.7 1.2,0.6 Z"/></svg>
<div class="a" style="left:776.765px;top:64.3125px;width:31.220000000000027px;height:31.220000000000027px;border:1.45px solid #a9a9a9;border-radius:3.3px"></div>
<div class="a" style="left:812.4449999999999px;top:64.3125px;width:31.220000000000027px;height:31.220000000000027px;border:1.45px solid #a9a9a9;border-radius:3.3px"></div>
<svg style="left:785.1275px;top:70.22199999999998px" width="15.61" height="15.61" viewBox="0 0 14 14"><path d="M10.68,3.91 A4.8,4.8 0 1 0 10.09,10.68" fill="none" stroke="#fff" stroke-width="2.1" /><path d="M13.5,0.8 L13.5,6.6 L7.6,6.4 Z" fill="#fff"/></svg>
<svg style="left:819.135px;top:76.35449999999992px" width="17.84" height="6.6899999999999995" viewBox="0 0 16 6"><circle cx="2.9" cy="3" r="2.5" fill="#fff"/><circle cx="8" cy="3" r="2.5" fill="#fff"/><circle cx="13.1" cy="3" r="2.5" fill="#fff"/></svg>
<div class="a" style="left:-7.080000000000005px;top:102px;width:850.745px;height:1px;background:#474747"></div>
<div class="t" style="font-size:15.0525px;line-height:18px;color:#e6e6e6;top:115.21px;left:-2.285500000000006px;letter-spacing:0.091px;">helpful info search</div>
<div class="t" style="font-size:15.0525px;line-height:18px;color:#ececec;top:115.21px;left:137.87px;letter-spacing:-0.010px;">конспектировал инфу от вадима каспарова</div>
<div class="t" style="font-size:12.265px;line-height:15px;color:#959595;top:117.01px;right:60.83px;text-align:right;letter-spacing:0.205px;">03/13/2023 06:47</div>
<div class="t" style="font-size:12.265px;line-height:15px;color:#959595;top:117.01px;right:164.06px;text-align:right;letter-spacing:0.343px;">19m</div>
<div class="t" style="font-size:12.265px;line-height:15px;color:#959595;top:117.01px;right:198.21px;text-align:right;letter-spacing:0.196px;">1</div>
<svg style="left:610.9644999999999px;top:118.16699999999992px" width="11.15" height="11.15" viewBox="0 0 10 10"><path fill="#9b9b9b" d="M1.2,0.6 L3.2,0.2 L4.4,3 L3.1,4.1 C3.8,5.6 4.6,6.4 6,7 L7.1,5.7 L9.8,6.9 L9.4,8.9 C9.3,9.4 8.9,9.7 8.4,9.7 C4.2,9.5 0.6,5.9 0.3,1.6 C0.3,1.1 0.6,0.7 1.2,0.6 Z"/></svg>
<div class="a" style="left:776.765px;top:108.91249999999991px;width:31.220000000000027px;height:31.220000000000027px;border:1.45px solid #a9a9a9;border-radius:3.3px"></div>
<div class="a" style="left:812.4449999999999px;top:108.91249999999991px;width:31.220000000000027px;height:31.220000000000027px;border:1.45px solid #a9a9a9;border-radius:3.3px"></div>
<svg style="left:785.1275px;top:114.822px" width="15.61" height="15.61" viewBox="0 0 14 14"><path d="M10.68,3.91 A4.8,4.8 0 1 0 10.09,10.68" fill="none" stroke="#fff" stroke-width="2.1" /><path d="M13.5,0.8 L13.5,6.6 L7.6,6.4 Z" fill="#fff"/></svg>
<svg style="left:819.135px;top:120.95449999999983px" width="17.84" height="6.6899999999999995" viewBox="0 0 16 6"><circle cx="2.9" cy="3" r="2.5" fill="#fff"/><circle cx="8" cy="3" r="2.5" fill="#fff"/><circle cx="13.1" cy="3" r="2.5" fill="#fff"/></svg>
<div class="a" style="left:-7.080000000000005px;top:146px;width:850.745px;height:1px;background:#474747"></div>
</div>
</body></html>
